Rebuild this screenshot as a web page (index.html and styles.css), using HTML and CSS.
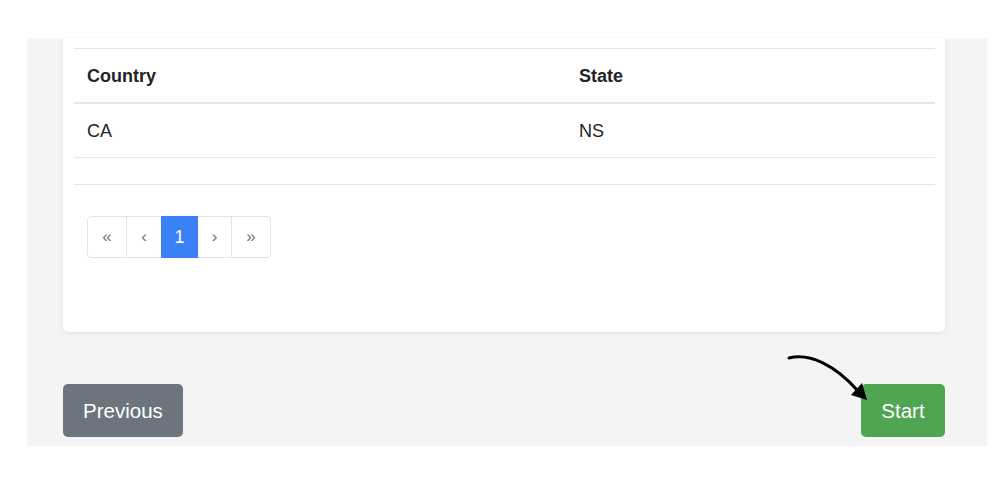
FILE: index.html
```html
<!DOCTYPE html>
<html lang="en">
<head>
<meta charset="utf-8">
<title>Review</title>
<link rel="stylesheet" href="styles.css">
</head>
<body>
<div class="panel">
  <div class="card">
    <table class="table">
      <thead>
        <tr><th class="col-a">Country</th><th>State</th></tr>
      </thead>
      <tbody>
        <tr class="data"><td>CA</td><td>NS</td></tr>
        <tr class="empty"><td></td><td></td></tr>
      </tbody>
    </table>
    <ul class="pagination">
      <li class="page w1">«</li>
      <li class="page w2">‹</li>
      <li class="page w3 active">1</li>
      <li class="page w4">›</li>
      <li class="page w5">»</li>
    </ul>
  </div>
  <div class="footer">
    <button class="btn btn-prev">Previous</button>
    <button class="btn btn-start">Start</button>
  </div>
  <svg class="arrow" width="100" height="60" viewBox="0 0 100 60">
    <path d="M9 13 C 30 8, 55 20, 78 46" fill="none" stroke="#000" stroke-width="3" stroke-linecap="round"/>
    <polygon points="87,55 71,50 82,38" fill="#000"/>
  </svg>
</div>
</body>
</html>
```
FILE: styles.css
```css
* { box-sizing: border-box; }
html, body { margin: 0; padding: 0; background: #fff; }
body {
  font-family: "Liberation Sans", Arial, Helvetica, sans-serif;
  color: #212529;
  font-size: 18px;
}
.panel {
  position: relative;
  margin: 38px 0 0 27px;
  width: 960px;
  height: 408px;
  background: #f4f4f4;
  padding: 0 42px 0 36px;
  display: flex;
  flex-direction: column;
}
.card {
  background: #fff;
  border-radius: 0 0 5px 5px;
  box-shadow: 0 1px 4px rgba(0,0,0,0.09);
  padding: 10px 10px 74px 11px;
}
.table {
  width: 100%;
  border-collapse: collapse;
}
.table th, .table td {
  text-align: left;
  padding: 13px 13px;
  line-height: 27px;
  border-top: 1px solid #e3e6ea;
  font-size: 18px;
}
.table th { font-weight: bold; border-bottom: 2px solid #e3e6ea; padding-top: 14px; padding-bottom: 12px; }
.table tr.data td { padding-top: 14px; padding-bottom: 12px; }
.col-a { width: 492px; }
.table tr.empty td { border-bottom: 1px solid #e3e6ea; line-height: 0; height: 27px; }
.pagination {
  list-style: none;
  margin: 31px 0 0 13px;
  padding: 0;
  display: flex;
}
.page {
  height: 42px;
  display: flex;
  align-items: center;
  justify-content: center;
  border: 1px solid #e1e4e8;
  margin-left: -1px;
  color: #6c757d;
  font-size: 17px;
  background: #fff;
}
.page.w1 { width: 40px; margin-left: 0; border-radius: 4px 0 0 4px; }
.page.w2 { width: 36px; }
.page.w3 { width: 37px; }
.page.w4 { width: 35px; }
.page.w5 { width: 40px; border-radius: 0 4px 4px 0; }
.page.active { background: #3a80f6; border-color: #3a80f6; color: #fff; font-size: 18px; position: relative; }
.footer {
  margin-top: 52px;
  display: flex;
  justify-content: space-between;
}
.btn {
  height: 53px;
  border: none;
  border-radius: 5px;
  color: #fff;
  font-family: "Liberation Sans", Arial, Helvetica, sans-serif;
  font-size: 20.5px;
  padding: 0;
  cursor: pointer;
}
.btn-prev { width: 120px; background: #6c757d; }
.btn-start { width: 84px; background: #50a553; }
.arrow {
  position: absolute;
  left: 753px;
  top: 307px;
}
```
